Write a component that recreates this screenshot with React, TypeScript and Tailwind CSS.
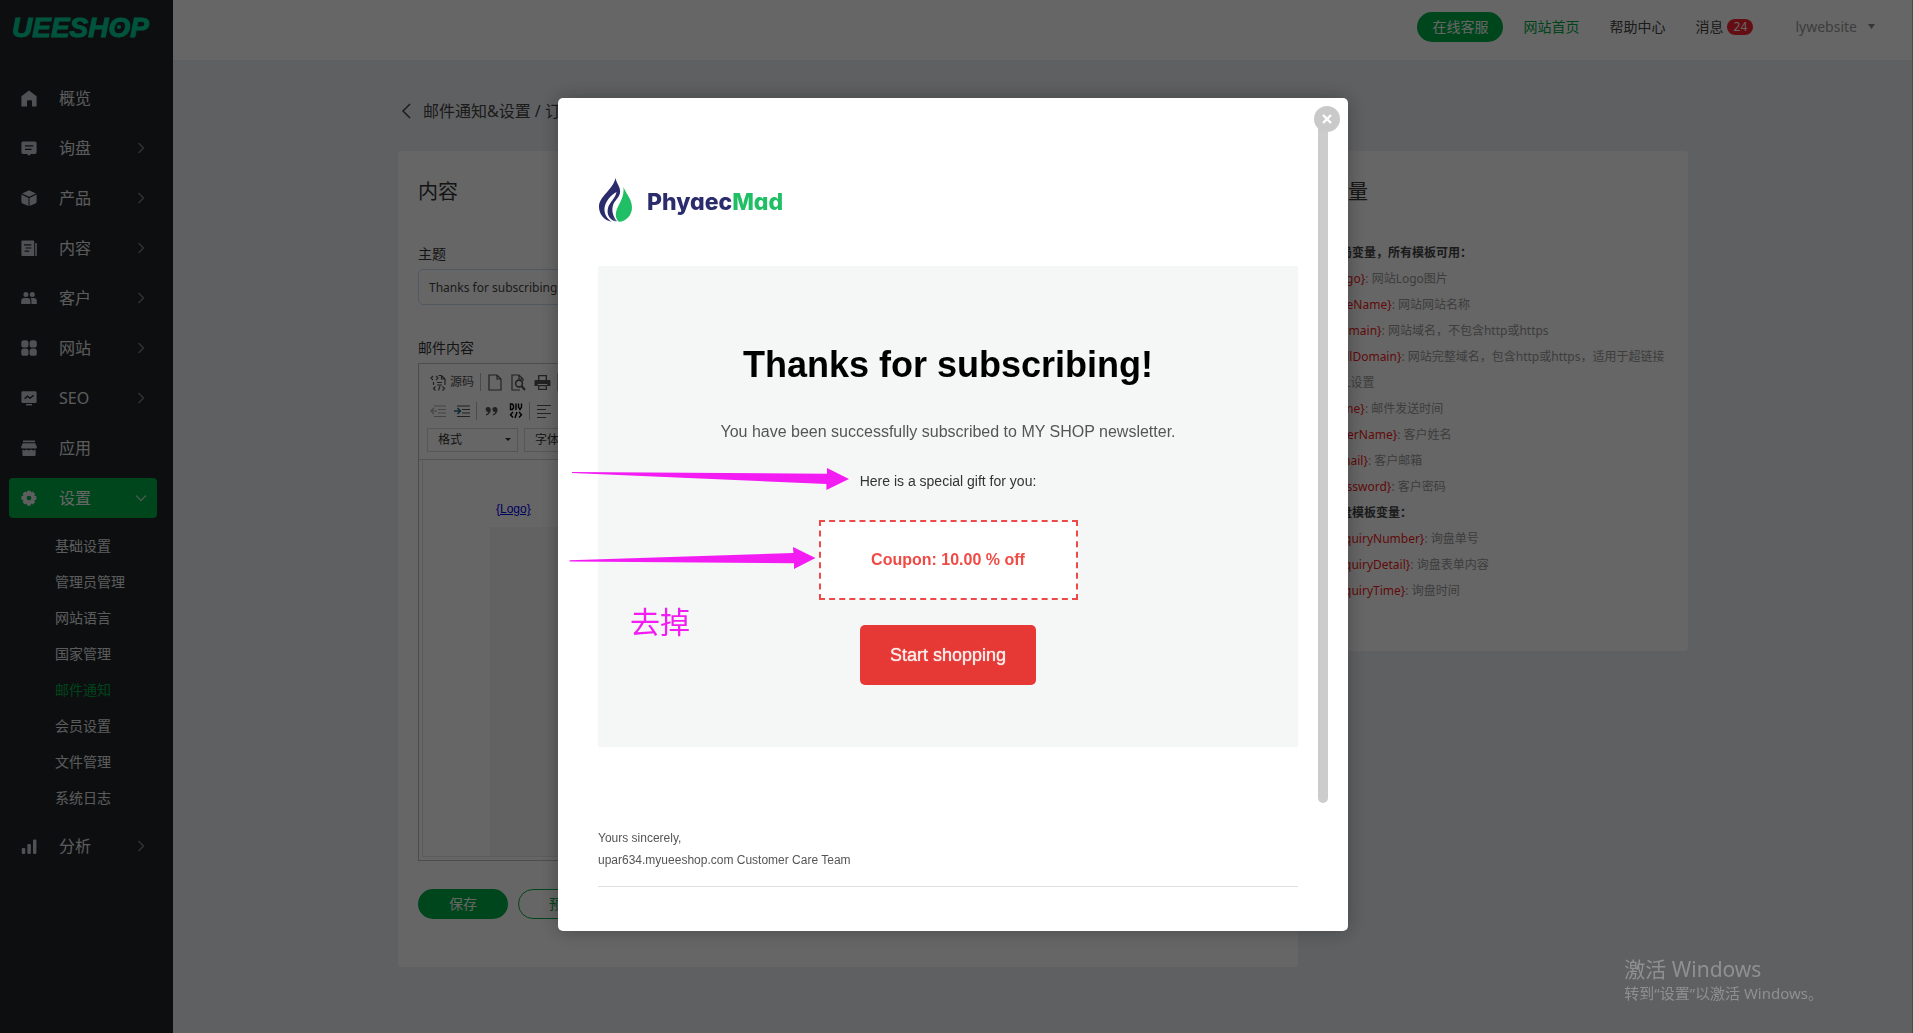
import React from 'react';

interface NavItem {
    label: string;
    icon: React.ReactNode;
    arrow?: boolean;
    active?: boolean;
    children?: string[];
}

const navItems: NavItem[] = [
    {
        label: '概览',
        icon: <path d="M8 0.5 15.6 6.2V16.5H11V11.2a1 1 0 0 0-1-1H7a1 1 0 0 0-1 1v5.3H0.4V6.2Z" />,
    },
    {
        label: '询盘',
        arrow: true,
        icon: <path fillRule="evenodd" d="M2 1.5h12a1.6 1.6 0 0 1 1.6 1.6v9.2a1.6 1.6 0 0 1-1.6 1.6h-4l-2 1.8-2-1.8H2a1.6 1.6 0 0 1-1.6-1.6V3.1A1.6 1.6 0 0 1 2 1.5ZM4 5.3v1.3h8.4V5.3Zm0 3.4V10h6.6V8.7Z" />,
    },
    {
        label: '产品',
        arrow: true,
        icon: <path d="M8 0.3 15 3.4 8 6.7 1 3.4ZM0.4 4.6 7.5 7.9V16L1.6 13.5a2 2 0 0 1-1.2-1.8ZM15.6 4.6 8.5 7.9V16l5.9-2.5a2 2 0 0 0 1.2-1.8Z" />,
    },
    {
        label: '内容',
        arrow: true,
        icon: <path fillRule="evenodd" d="M1.4 0.4h11a.8.8 0 0 1 .8.8V16H1.4a1 1 0 0 1-1-1V1.4a1 1 0 0 1 1-1ZM3 4.2v1.2h7.4V4.2Zm1.6 3.2v1.2h5.8V7.4ZM3.6 10.6v1.2h4.6v-1.2ZM14.2 3H15a.8.8 0 0 1 .8.8v11.4a.8.8 0 0 1-.8.8h-.8Z" />,
    },
    {
        label: '客户',
        arrow: true,
        icon: (
            <>
                <circle cx="4.9" cy="4.6" r="2.5" />
                <circle cx="11.3" cy="4.6" r="2.5" />
                <path d="M0.2 14V11.2A3.2 3.2 0 0 1 3.4 8h3.2a3.2 3.2 0 0 1 2.8 3.2V14ZM10.4 14V11.2A4 4 0 0 0 9.4 8h3.2a3.2 3.2 0 0 1 3.2 3.2V14Z" />
            </>
        ),
    },
    {
        label: '网站',
        arrow: true,
        icon: (
            <>
                <rect x="0.3" y="0.3" width="7.2" height="7.2" rx="2.6" />
                <rect x="8.6" y="0.3" width="7.2" height="7.2" rx="2.6" />
                <rect x="0.3" y="8.6" width="7.2" height="7.2" rx="2.6" />
                <rect x="8.6" y="8.6" width="7.2" height="7.2" rx="2.6" />
            </>
        ),
    },
    {
        label: 'SEO',
        arrow: true,
        icon: (
            <>
                <path d="M1.6 1.3h12.8a1.2 1.2 0 0 1 1.2 1.2v9.3a1.2 1.2 0 0 1-1.2 1.2H1.6a1.2 1.2 0 0 1-1.2-1.2V2.5a1.2 1.2 0 0 1 1.2-1.2Z" />
                <path d="M3.6 8.8 6.4 6.2l2.6 2 3.6-2.8" fill="none" stroke="#202528" strokeWidth="1.4" />
                <rect x="5" y="14" width="6" height="1.4" />
            </>
        ),
    },
    {
        label: '应用',
        icon: <path d="M2 0.6h12v1.6H2ZM1.8 3.2h12.4l1.6 3.4v.8a1 1 0 0 1-1 1H1.2a1 1 0 0 1-1-1v-.8ZM1.4 9.4 3.5 10.4l2-1 2.3 1 2.3-1 2.2 1 2.3-1V15a1 1 0 0 1-1 1H2.4a1 1 0 0 1-1-1Z" />,
    },
    {
        label: '设置',
        arrow: true,
        active: true,
        icon: (
            <path
                fillRule="evenodd"
                d="M6.300 0.800h3.400l.4 1.800 1.600-1 2.400 2.400-1 1.600 2.300.7v3.400l-2.200.6 1 1.700-2.400 2.400-1.700-1-.6 2.300H6.300l-.6-2.200-1.700 1L1.600 12l1-1.700L.4 9.700V6.300l2.200-.7-1-1.600L4 1.600l1.700 1ZM8 5.700a2.400 2.400 0 1 0 0 4.800 2.400 2.400 0 0 0 0-4.800Z"
            />
        ),
        children: ['基础设置', '管理员管理', '网站语言', '国家管理', '邮件通知', '会员设置', '文件管理', '系统日志'],
    },
    {
        label: '分析',
        arrow: true,
        icon: (
            <>
                <rect x="0.8" y="10" width="3.4" height="6" rx="1.2" />
                <rect x="6.4" y="6" width="3.4" height="10" rx="1.2" />
                <rect x="12" y="1.6" width="3.4" height="14.4" rx="1.2" />
            </>
        ),
    },
];

interface Variable {
    name?: string;
    text: string;
}

const variables: Variable[] = [
    { text: '全局变量，所有模板可用：' },
    { name: '{Logo}', text: '网站Logo图片' },
    { name: '{SiteName}', text: '网站网站名称' },
    { name: '{Domain}', text: '网站域名，不包含http或https' },
    { name: '{FullDomain}', text: '网站完整域名，包含http或https，适用于超链接URL设置' },
    { name: '{Time}', text: '邮件发送时间' },
    { name: '{UserName}', text: '客户姓名' },
    { name: '{Email}', text: '客户邮箱' },
    { name: '{Password}', text: '客户密码' },
    { text: '询盘模板变量：' },
    { name: '{InquiryNumber}', text: '询盘单号' },
    { name: '{InquiryDetail}', text: '询盘表单内容' },
    { name: '{InquiryTime}', text: '询盘时间' },
];

const Sidebar: React.FC = () => (
    <aside className="w-[173px] shrink-0 bg-[#202528]">
        <svg className="ml-2 mt-2 h-9 w-[157px]" viewBox="0 0 157 36" role="img" aria-label="UEESHOP">
            <text x="4" y="29" fontFamily="Liberation Sans, sans-serif" fontSize="28" fontWeight="bold" fontStyle="italic" fill="#00cf9a" stroke="#00cf9a" strokeWidth="1">
                UEESHOP
            </text>
            <circle cx="111" cy="19" r="2" fill="#00cf9a" />
        </svg>
        <nav className="mt-[34px] flex flex-col gap-[10px] px-[9px]">
            {navItems.map((item) => (
                <div key={item.label}>
                    <a
                        href="#"
                        className={`flex h-10 w-[148px] items-center rounded pl-3 pr-[10px] text-base ${item.active ? 'bg-[#00b048] text-white' : 'text-[#e4e4e6]'}`}
                    >
                        <svg className={`h-[17px] w-4 ${item.active ? 'text-[#eee]' : 'text-[#c8cad2]'}`} viewBox="0 0 16 17" fill="currentColor">
                            {item.icon}
                        </svg>
                        <span className="ml-[22px] flex-1">{item.label}</span>
                        {item.arrow && (
                            <svg className={`size-3 ${item.active ? 'text-[#b0dcc0]' : 'text-[#7c7f84]'}`} viewBox="0 0 12 12" fill="none" stroke="currentColor" strokeWidth="1.4">
                                <path d={item.active ? 'M1 3.5 6 8.5l5-5' : 'M3.5 1l5 5-5 5'} />
                            </svg>
                        )}
                    </a>
                    {item.children && (
                        <ul className="mt-[10px]">
                            {item.children.map((child) => (
                                <li key={child}>
                                    <a href="#" className={`block pl-[46px] text-sm leading-9 ${child === '邮件通知' ? 'text-[#00a845]' : 'text-[#e4e4e6]'}`}>
                                        {child}
                                    </a>
                                </li>
                            ))}
                        </ul>
                    )}
                </div>
            ))}
        </nav>
    </aside>
);

const Header: React.FC = () => (
    <header className="flex h-[60px] items-start justify-end bg-white pr-[38px] pt-3 text-sm leading-[30px] text-[#444]">
        <button className="h-[30px] w-[86px] rounded-full bg-[#00b048] text-white">在线客服</button>
        <a href="#" className="ml-5 text-[#00a845]">网站首页</a>
        <a href="#" className="ml-[30px]">帮助中心</a>
        <a href="#" className="ml-[30px] flex items-center gap-1">
            消息
            <span className="h-4 w-[26px] rounded-full bg-[#fb2230] text-center text-xs leading-4 text-white">24</span>
        </a>
        <button className="ml-[42px] flex items-center gap-[11px] text-[#999]">
            lywebsite
            <svg className="h-[6px] w-[7px]" viewBox="0 0 7 6" fill="#888">
                <path d="M0 0h7L3.500 5Z" />
            </svg>
        </button>
    </header>
);

const ToolSeparator: React.FC = () => <span className="mx-[6px] h-[18px] w-px bg-[#bbb]"></span>;

const FormatSelect: React.FC<{ label: string }> = ({ label }) => (
    <div className="relative w-[91px]">
        <select aria-label={label} className="h-6 w-full appearance-none border border-[#d8d8d8] bg-transparent pl-[10px] text-xs text-[#333]">
            <option>{label}</option>
        </select>
        <svg className="absolute right-[7px] top-[10px] h-[3px] w-[6px]" viewBox="0 0 6 3" fill="#333">
            <path d="M0 0h6L3 3Z" />
        </svg>
    </div>
);

const Toolbar: React.FC = () => (
    <div className="h-24 overflow-hidden border-b border-[#d1d1d1] px-2 pt-[3px] text-xs text-[#555]">
        <div className="flex h-[30px] items-center">
            <button className="flex items-center gap-[3px] pl-[3px]">
                <svg className="size-[17px]" viewBox="0 0 17 17" fill="none" stroke="currentColor" strokeWidth="1.2">
                    <path d="M3 2 1 4l2 2M6 2l2 2-2 2M8.500 1.500h3l3.500 3.500v6M11.500 1.500V5H15M3.500 8v3M7 8.500h5M7 11h5M5.500 12.500 3.500 14.500l2 2M10 12l-1.500 4.500M12.500 12.500l2 2-2 2" />
                </svg>
                源码
            </button>
            <ToolSeparator />
            <button aria-label="新建" className="ml-[1px]">
                <svg className="h-[17px] w-[14px]" viewBox="0 0 14 17" fill="none" stroke="currentColor" strokeWidth="1.2">
                    <path d="M1 1h8l4 4v11H1ZM9 1v4h4" />
                </svg>
            </button>
            <button aria-label="预览" className="ml-2">
                <svg className="size-[17px]" viewBox="0 0 17 17" fill="none" stroke="currentColor" strokeWidth="1.2">
                    <path d="M13 7V5L9 1H2v15h8M9 1v4h4" />
                    <circle cx="9" cy="9.500" r="3.400" strokeWidth="1.600" />
                    <path d="M11.500 12l3.500 4" strokeWidth="2.200" />
                </svg>
            </button>
            <button aria-label="打印" className="ml-[7px]">
                <svg className="size-[17px]" viewBox="0 0 17 17" fill="currentColor">
                    <path d="M4 1h9v5h-1.4V2.3H5.4V6H4Z" />
                    <path d="M1.5 6H15.500a1 1 0 0 1 1 1v5h-3.300V10H3.800v2H.5V7a1 1 0 0 1 1-1Z" />
                    <path d="M4 11h9v5H4Zm1.300 1.200v2.600h6.400v-2.600Z" fillRule="evenodd" />
                </svg>
            </button>
            <ToolSeparator />
        </div>
        <div className="flex h-7 items-center">
            <button aria-label="减少缩进" className="ml-[3px] text-[#aaa]">
                <svg className="size-4" viewBox="0 0 16 16" fill="none" stroke="currentColor" strokeWidth="1.2">
                    <path d="M4 3h12M8 6.500h8M8 10h8M4 13.500h12M7 8H1M4 5 1 8l3 3" />
                </svg>
            </button>
            <button aria-label="增加缩进" className="ml-2">
                <svg className="size-4" viewBox="0 0 16 16" fill="none" stroke="currentColor" strokeWidth="1.2">
                    <path d="M3 3h13M8 6.500h8M8 10h8M3 13.500h13" />
                    <path d="M0 8h6M3.500 5l3 3-3 3" stroke="#2b6a86" strokeWidth="1.6" />
                </svg>
            </button>
            <ToolSeparator />
            <button aria-label="引用" className="ml-[2px]">
                <svg className="h-4 w-[13px]" viewBox="0 0 13 16" fill="currentColor">
                    <path d="M3 4a2.500 2.500 0 0 1 2.800 2.700C5.800 9.400 4 11.600 1 12.500V11.300C2.500 10.700 3.300 9.800 3.400 9A2.500 2.500 0 1 1 3 4ZM9.800 4a2.500 2.500 0 0 1 2.800 2.700c0 2.700-1.800 4.900-4.800 5.800V11.300c1.500-.6 2.300-1.500 2.400-2.300A2.500 2.500 0 1 1 9.800 4Z" />
                </svg>
            </button>
            <button aria-label="DIV" className="ml-[11px] text-black">
                <svg className="h-4 w-[14px]" viewBox="0 0 14 16" fill="none" stroke="currentColor" strokeWidth="1.4">
                    <path d="M1.500 1v5.500h1.800L4.500 5V2.500L3.300 1ZM7 .5V7M9.500.5V4l1.500 2.500L12.500 4V.5M4 9 1.500 11.700 4 14.500M10 9l2.500 2.700L10 14.500M8 9l-2 6" />
                </svg>
            </button>
            <ToolSeparator />
            <button aria-label="左对齐">
                <svg className="size-4" viewBox="0 0 16 16" fill="none" stroke="currentColor" strokeWidth="1.2">
                    <path d="M1 2.500h14M1 6.500h9M1 10.500h14M1 14.500h9" />
                </svg>
            </button>
        </div>
        <div className="mt-[3px] flex gap-[6px]">
            <FormatSelect label="格式" />
            <FormatSelect label="字体" />
        </div>
    </div>
);

const ContentCard: React.FC = () => (
    <section className="flex-1 rounded bg-white px-5 pb-12 pt-6">
        <h2 className="text-xl leading-[34px] text-[#333]">内容</h2>
        <label htmlFor="subject" className="mt-[35px] block text-sm leading-5 text-[#333]">主题</label>
        <input
            id="subject"
            type="text"
            defaultValue="Thanks for subscribing!"
            className="mt-[5px] h-9 w-full rounded-[5px] border border-[#ccdced] px-[10px] text-xs text-[#444]"
        />
        <p className="mt-[33px] text-sm leading-5 text-[#333]">邮件内容</p>
        <div className="mt-[5px] border border-[#bfbfbf]">
            <Toolbar />
            <div className="mx-[3px] mb-[3px] h-[397px] overflow-hidden border-x border-b border-[#e6e6e6] pl-[67px] pt-[39px] font-['Liberation_Sans',Arial,sans-serif] text-xs">
                <a href="#" className="ml-[6px] leading-5 text-[#0000ee] underline">{'{Logo}'}</a>
                <div className="mt-2 h-[360px] w-[700px] bg-[#f6f6f6]"></div>
            </div>
        </div>
        <div className="mt-7 flex gap-[10px] text-sm">
            <button className="h-[30px] w-[90px] rounded-full bg-[#00b048] text-white">保存</button>
            <button className="h-[30px] w-[90px] rounded-full border border-[#00b048] text-[#00a845]">预览</button>
        </div>
    </section>
);

const VariableCard: React.FC = () => (
    <section className="w-[380px] rounded bg-white px-5 pb-[47px] pt-6">
        <h2 className="text-xl leading-[34px] text-[#333]">变量</h2>
        <ul className="mt-[31px] text-xs leading-[26px]">
            {variables.map((v) => (
                <li key={v.name ?? v.text} className={v.name ? 'text-[#999]' : 'font-bold text-[#444]'}>
                    {v.name && <span className="text-[#f01919]">{v.name}</span>}
                    {v.name ? `: ${v.text}` : v.text}
                </li>
            ))}
        </ul>
    </section>
);

const BrandLogo: React.FC = () => (
    <div className="flex h-11 gap-[15px]">
        <svg className="h-11 w-[34px]" viewBox="0 0 34 44">
            <path fill="#2b2c6c" d="M17.500 0C18.500 6 23 9 22 15C21 21 14 24 13 31C12.500 36 15 41 18 43.600C11 41.500 8.500 36 10 30C11.500 24 17.500 20.500 18.500 14C13 17 7.500 23 6.500 30C6 36 9 41 14 43.800C6 42.500 1 36 1 29C1 18 15 12 17.500 0Z" />
            <path fill="#2b2c6c" d="M18 21C15 25 13.500 31 15 36C15.800 39 17.500 42 19.500 43.800C14 41 11.500 36 12.500 30.500C13.300 26.500 15.500 23.500 18 21Z" />
            <path fill="#20bf66" d="M25.500 9C28 16 34 21 34 29.500C34 37 28.500 43.500 21 43.800C17.500 41 17 36 19 31C21 25.500 26.500 19 25.500 9Z" />
        </svg>
        <span className="mt-2 font-[Inter] text-[23px] font-extrabold leading-8 text-[#2b2c6c] [font-feature-settings:'cv11']">
            Phyaec<span className="text-[#20bf66]">Mad</span>
        </span>
    </div>
);

const PreviewModal: React.FC = () => (
    <div className="fixed inset-0 flex items-center justify-center bg-black/60 pb-1 pr-[7px]">
        <div
            role="dialog"
            aria-label="邮件预览"
            className="relative w-[790px] rounded-[5px] bg-white px-10 pb-11 pt-20 font-['Liberation_Sans',Arial,sans-serif] shadow-[0_0_20px_rgba(0,0,0,0.3)]"
        >
            <div className="absolute bottom-32 right-5 top-6 w-[10px] rounded-[5px] bg-[#ccc]"></div>
            <button aria-label="关闭" className="absolute right-2 top-2 flex size-[26px] items-center justify-center rounded-full bg-[#c9c9c9]">
                <svg className="size-[10px]" viewBox="0 0 10 10" stroke="#fff" strokeWidth="2.4">
                    <path d="M1 1l8 8M9 1 1 9" />
                </svg>
            </button>

            <BrandLogo />

            <div className="mr-[10px] mt-11 flex flex-col items-center bg-[#f5f7f7] pb-[62px] pt-[77px]">
                <h1 className="text-4xl font-bold leading-[44px] text-black">Thanks for subscribing!</h1>
                <p className="mt-8 text-base leading-[26px] text-[#555]">You have been successfully subscribed to MY SHOP newsletter.</p>
                <p className="mt-[26px] text-sm leading-5 text-[#333]">Here is a special gift for you:</p>
                <div className="mt-[29px] flex h-20 w-[259px] items-center justify-center border-2 border-dashed border-[#ee4a4a] bg-white font-bold text-[#f04a45]">
                    Coupon: 10.00 % off
                </div>
                <button className="mt-[25px] h-[60px] w-44 rounded-[5px] bg-[#e63935] text-lg text-[#fdeeec] [text-shadow:0_0_1px_#fdeeec]">Start shopping</button>
            </div>

            <div className="mr-[10px] mt-20 border-b border-[#e0e0e0] pb-[15px] text-xs leading-[22px] text-[#555]">
                <p>Yours sincerely,</p>
                <p>upar634.myueeshop.com Customer Care Team</p>
            </div>

            {/* Review marks drawn over the mail */}
            <svg className="pointer-events-none absolute left-[11px] top-[369px] h-[104px] w-[281px]" viewBox="569 467 281 104" fill="#f31cf3">
                <path d="M572 472 827 473.700V468L849 479 826.400 490V484L572 473Z" />
                <path d="M569.600 560.300 793.400 553 793 547 815.500 558 794 569V563.300L569.600 561.500Z" />
            </svg>
            <span className="absolute left-[72px] top-[504px] font-['Noto_Sans_CJK_SC',sans-serif] text-[30px] leading-9 text-[#f31cf3]">去掉</span>
        </div>
    </div>
);

export default function App() {
    return (
        <div className="flex min-h-screen bg-[#eef0f5] font-['Noto_Sans','Noto_Sans_CJK_SC',sans-serif]">
            <Sidebar />
            <div className="min-w-0 flex-1">
                <Header />
                <main className="mx-auto max-w-[1290px] pt-[31px]">
                    <a href="#" className="flex h-10 items-center pl-1 text-base text-[#444]">
                        <svg className="h-4 w-[9px]" viewBox="0 0 9 16" fill="none" stroke="currentColor" strokeWidth="1.5">
                            <path d="M8 1 1 8l7 7" />
                        </svg>
                        <span className="ml-3">邮件通知&amp;设置 / 订阅通知</span>
                    </a>
                    <div className="mt-5 flex items-start gap-[10px]">
                        <ContentCard />
                        <VariableCard />
                    </div>
                </main>
            </div>
            <PreviewModal />
            <div className="fixed inset-y-0 right-0 w-px bg-[#2c5c48]"></div>
            <div className="pointer-events-none fixed bottom-7 right-[90px] text-[#8f9091]">
                <p className="text-[21px] leading-6">激活 Windows</p>
                <p className="text-[15px] leading-6">转到“设置”以激活 Windows。</p>
            </div>
        </div>
    );
}
